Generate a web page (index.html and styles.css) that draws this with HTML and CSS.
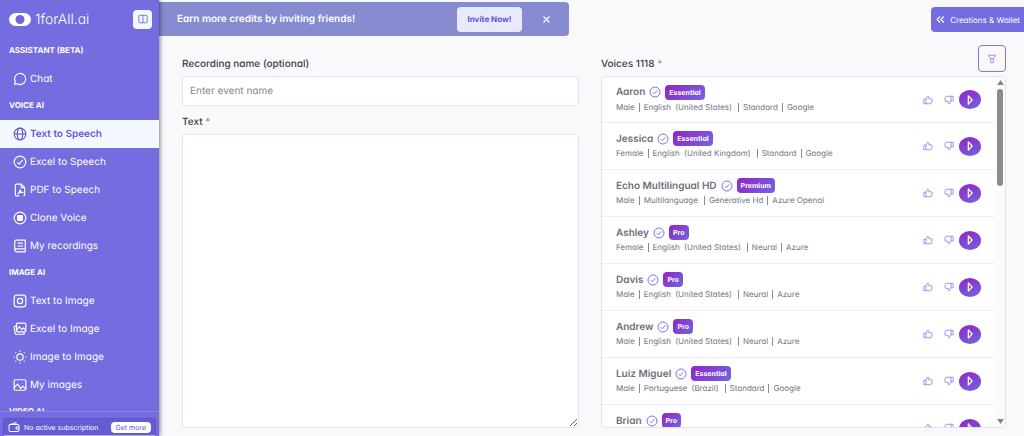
FILE: index.html
```html
<!DOCTYPE html>
<html lang="en">
<head>
    <meta charset="UTF-8">
    <meta name="viewport" content="width=device-width, initial-scale=1.0">
    <title>1forAll.ai | Text to Speech</title>
    <link rel="stylesheet" href="styles.css">
</head>
<body>
    <!-- Shared icons -->
    <svg class="icon-defs" aria-hidden="true">
        <symbol id="check-badge" viewBox="0 0 24 24"><circle cx="12" cy="12" r="10"/><path d="M7.500 12.500l3 3 6-7"/></symbol>
        <symbol id="thumb-up" viewBox="0 0 24 24"><path d="M2 10h5v11H2zM7 11l4-8c2 0 3 1 3 3v3h6c1.500 0 2.300 1 2 2.500l-1.500 7.500c-.3 1.300-1 2-2.500 2H7"/></symbol>
        <symbol id="thumb-down" viewBox="0 0 24 24"><path d="M22 14h-5V3h5zM17 13l-4 8c-2 0-3-1-3-3v-3H4c-1.500 0-2.300-1-2-2.500L3.500 5c.3-1.300 1-2 2.500-2h11"/></symbol>
        <symbol id="play" viewBox="0 0 24 24"><path d="M8 2l9 10-9 10z"/></symbol>
    </svg>

    <!-- Sidebar -->
    <aside class="sidebar">
        <div class="brand">
            <a href="#" class="logo">
                <svg class="logo-mark" viewBox="0 0 22 13" aria-hidden="true"><rect width="22" height="13" rx="6.500" fill="#fff"/><circle cx="11" cy="6.500" r="4.500" fill="#6f66dc"/></svg>
                <span>1forAll.ai</span>
            </a>
            <button type="button" class="collapse-button" aria-label="Collapse menu">
                <svg viewBox="0 0 24 24"><rect x="2" y="3" width="20" height="18" rx="2"/><path d="M12 3v18"/></svg>
            </button>
        </div>
        <nav class="menu">
            <h2>ASSISTANT (BETA)</h2>
            <a href="#"><svg viewBox="0 0 24 24"><path d="M2.500 21.500l1.400-5A9.500 9.500 0 1 1 7.500 20.200z"/></svg>Chat</a>

            <h2>VOICE AI</h2>
            <a href="#" class="active"><svg viewBox="0 0 24 24"><circle cx="12" cy="12" r="10"/><ellipse cx="12" cy="12" rx="4.500" ry="10"/><path d="M2 12h20"/></svg>Text to Speech</a>
            <a href="#"><svg viewBox="0 0 24 24"><use href="#check-badge"/></svg>Excel to Speech</a>
            <a href="#"><svg viewBox="0 0 24 24"><path d="M11 22H6a2 2 0 0 1-2-2V4a2 2 0 0 1 2-2h8l6 6v12a2 2 0 0 1-2 2M14 2v6h6M8 19c3-2 4-5 4-8M12 12c1 3 3 5 6 5M9 17c2-1 5-2 8-1"/></svg>PDF to Speech</a>
            <a href="#"><svg viewBox="0 0 24 24"><circle cx="12" cy="12" r="10"/><rect x="8" y="8" width="8" height="8" rx="1" fill="currentColor"/></svg>Clone Voice</a>
            <a href="#"><svg viewBox="0 0 24 24"><path d="M21 17V2H5a2 2 0 0 0-2 2v15a3 3 0 0 0 3 3h15v-5H6a3 3 0 0 0-3 2M8 7h9M8 12h9"/></svg>My recordings</a>

            <h2>IMAGE AI</h2>
            <a href="#"><svg viewBox="0 0 24 24"><rect x="2" y="2" width="20" height="20" rx="5"/><circle cx="12" cy="12" r="4.500"/><path d="M17.500 6v1"/></svg>Text to Image</a>
            <a href="#"><svg viewBox="0 0 24 24"><rect x="6" y="2" width="16" height="15" rx="2"/><path d="M6 6L2 8l2 13h15v-4M6 14l5-6 4 5 3-3 4 5"/></svg>Excel to Image</a>
            <a href="#"><svg viewBox="0 0 24 24"><circle cx="12" cy="12" r="5.500"/><path d="M12 1v2M12 21v2M1 12h2M21 12h2M4 4l1.500 1.500M18.500 18.500L20 20M20 4l-1.500 1.500M5.500 18.500L4 20"/></svg>Image to Image</a>
            <a href="#"><svg viewBox="0 0 24 24"><rect x="2" y="3" width="20" height="18" rx="2"/><path d="M2 17l6-7 5 8 4-4 5 5M16 8v1"/></svg>My images</a>

            <h2>VIDEO AI</h2>
        </nav>
        <div class="plan">
            <div class="plan-card">
                <svg viewBox="0 0 24 24"><path d="M3 7h17a2 2 0 0 1 2 2v10a2 2 0 0 1-2 2H4a2 2 0 0 1-2-2V8l14-5v4M22 12h-6v4h6"/></svg>
                <span>No active subscription</span>
                <a href="#">Get more</a>
            </div>
        </div>
    </aside>

    <!-- Main Section -->
    <main>
        <div class="topbar">
            <div class="banner">
                <p>Earn more credits by inviting friends!</p>
                <button type="button" class="invite-button">Invite Now!</button>
                <button type="button" class="close-button" aria-label="Close">
                    <svg viewBox="0 0 24 24"><path d="M4 4l16 16M20 4L4 20"/></svg>
                </button>
            </div>
            <button type="button" class="wallet-button">
                <svg viewBox="0 0 24 24"><path d="M11 4l-8 8 8 8M21 4l-8 8 8 8"/></svg>
                Creations &amp; Wallet
            </button>
        </div>

        <div class="workspace">
            <form class="recording">
                <label for="recording-name">Recording name (optional)</label>
                <input type="text" id="recording-name" placeholder="Enter event name">
                <label for="recording-text">Text <span class="required">*</span></label>
                <textarea id="recording-text"></textarea>
            </form>

            <section class="voices">
                <div class="voices-head">
                    <h3>Voices 1118 <span class="required">*</span></h3>
                    <button type="button" class="filter-button" aria-label="Filter voices">
                        <svg viewBox="0 0 24 24"><path d="M3 3h18l-6 9v9H9v-9zM8 11h8"/></svg>
                    </button>
                </div>
                <div class="voices-box">
                    <ul class="voice-list">
                        <li>
                            <div class="voice">
                                <p class="name">Aaron <svg><use href="#check-badge"/></svg><span class="badge">Essential</span></p>
                                <p class="meta"><span>Male</span><span class="lang">English <i>(United States)</i></span><span>Standard</span><span>Google</span></p>
                            </div>
                            <button type="button" class="vote" aria-label="Like"><svg><use href="#thumb-up"/></svg></button>
                            <button type="button" class="vote" aria-label="Dislike"><svg><use href="#thumb-down"/></svg></button>
                            <button type="button" class="play" aria-label="Play"><svg><use href="#play"/></svg></button>
                        </li>
                        <li>
                            <div class="voice">
                                <p class="name">Jessica <svg><use href="#check-badge"/></svg><span class="badge">Essential</span></p>
                                <p class="meta"><span>Female</span><span class="lang">English <i>(United Kingdom)</i></span><span>Standard</span><span>Google</span></p>
                            </div>
                            <button type="button" class="vote" aria-label="Like"><svg><use href="#thumb-up"/></svg></button>
                            <button type="button" class="vote" aria-label="Dislike"><svg><use href="#thumb-down"/></svg></button>
                            <button type="button" class="play" aria-label="Play"><svg><use href="#play"/></svg></button>
                        </li>
                        <li>
                            <div class="voice">
                                <p class="name">Echo Multilingual HD <svg><use href="#check-badge"/></svg><span class="badge">Premium</span></p>
                                <p class="meta"><span>Male</span><span class="lang">Multilanguage</span><span>Generative Hd</span><span>Azure Openai</span></p>
                            </div>
                            <button type="button" class="vote" aria-label="Like"><svg><use href="#thumb-up"/></svg></button>
                            <button type="button" class="vote" aria-label="Dislike"><svg><use href="#thumb-down"/></svg></button>
                            <button type="button" class="play" aria-label="Play"><svg><use href="#play"/></svg></button>
                        </li>
                        <li>
                            <div class="voice">
                                <p class="name">Ashley <svg><use href="#check-badge"/></svg><span class="badge">Pro</span></p>
                                <p class="meta"><span>Female</span><span class="lang">English <i>(United States)</i></span><span>Neural</span><span>Azure</span></p>
                            </div>
                            <button type="button" class="vote" aria-label="Like"><svg><use href="#thumb-up"/></svg></button>
                            <button type="button" class="vote" aria-label="Dislike"><svg><use href="#thumb-down"/></svg></button>
                            <button type="button" class="play" aria-label="Play"><svg><use href="#play"/></svg></button>
                        </li>
                        <li>
                            <div class="voice">
                                <p class="name">Davis <svg><use href="#check-badge"/></svg><span class="badge">Pro</span></p>
                                <p class="meta"><span>Male</span><span class="lang">English <i>(United States)</i></span><span>Neural</span><span>Azure</span></p>
                            </div>
                            <button type="button" class="vote" aria-label="Like"><svg><use href="#thumb-up"/></svg></button>
                            <button type="button" class="vote" aria-label="Dislike"><svg><use href="#thumb-down"/></svg></button>
                            <button type="button" class="play" aria-label="Play"><svg><use href="#play"/></svg></button>
                        </li>
                        <li>
                            <div class="voice">
                                <p class="name">Andrew <svg><use href="#check-badge"/></svg><span class="badge">Pro</span></p>
                                <p class="meta"><span>Male</span><span class="lang">English <i>(United States)</i></span><span>Neural</span><span>Azure</span></p>
                            </div>
                            <button type="button" class="vote" aria-label="Like"><svg><use href="#thumb-up"/></svg></button>
                            <button type="button" class="vote" aria-label="Dislike"><svg><use href="#thumb-down"/></svg></button>
                            <button type="button" class="play" aria-label="Play"><svg><use href="#play"/></svg></button>
                        </li>
                        <li>
                            <div class="voice">
                                <p class="name">Luiz Miguel <svg><use href="#check-badge"/></svg><span class="badge">Essential</span></p>
                                <p class="meta"><span>Male</span><span class="lang">Portuguese <i>(Brazil)</i></span><span>Standard</span><span>Google</span></p>
                            </div>
                            <button type="button" class="vote" aria-label="Like"><svg><use href="#thumb-up"/></svg></button>
                            <button type="button" class="vote" aria-label="Dislike"><svg><use href="#thumb-down"/></svg></button>
                            <button type="button" class="play" aria-label="Play"><svg><use href="#play"/></svg></button>
                        </li>
                        <li>
                            <div class="voice">
                                <p class="name">Brian <svg><use href="#check-badge"/></svg><span class="badge">Pro</span></p>
                            </div>
                            <button type="button" class="vote" aria-label="Like"><svg><use href="#thumb-up"/></svg></button>
                            <button type="button" class="vote" aria-label="Dislike"><svg><use href="#thumb-down"/></svg></button>
                            <button type="button" class="play" aria-label="Play"><svg><use href="#play"/></svg></button>
                        </li>
                    </ul>
                    <div class="scrollbar" aria-hidden="true">
                        <svg viewBox="0 0 8 6"><path d="M4 0l4 6H0z"/></svg>
                        <div class="thumb"></div>
                        <svg viewBox="0 0 8 6"><path d="M4 6l4-6H0z"/></svg>
                    </div>
                </div>
            </section>
        </div>
    </main>
</body>
</html>
```
FILE: styles.css
```css
/* General Styles */
* {
    box-sizing: border-box;
}

body {
    font-family: Inter, "Liberation Sans", sans-serif;
    font-feature-settings: "cv11";
    font-size: 10px;
    text-rendering: geometricPrecision;
    background-color: #f9f9fc;
    color: #3a3c4c;
    margin: 0;
    display: flex;
    height: 100vh;
    overflow: hidden;
}

h2,
h3,
p,
ul {
    margin: 0;
    padding: 0;
}

button,
input,
textarea {
    font: inherit;
    font-feature-settings: inherit;
    text-rendering: inherit;
    margin: 0;
    padding: 0;
}

button {
    border: none;
    cursor: pointer;
    display: flex;
    align-items: center;
    justify-content: center;
}

a {
    color: inherit;
    text-decoration: none;
}

svg {
    fill: none;
    stroke: currentColor;
    stroke-width: 2;
    stroke-linejoin: round;
    flex: none;
}

.icon-defs {
    position: absolute;
    width: 0;
    height: 0;
}

/* Sidebar */
.sidebar {
    width: 159px;
    flex: none;
    display: flex;
    flex-direction: column;
    background-color: #756ce0;
    color: white;
    box-shadow: 1px 0 4px rgba(0, 0, 0, 0.5);
    z-index: 1;
}

.brand {
    display: flex;
    align-items: center;
    justify-content: space-between;
    height: 38px;
    flex: none;
    padding: 0 7px 0 9px;
}

.logo {
    display: flex;
    align-items: center;
    gap: 4px;
    font-size: 14px;
    font-weight: 300;
}

.logo-mark {
    width: 22px;
    height: 13px;
    stroke: none;
}

.collapse-button {
    width: 19px;
    height: 19px;
    border-radius: 4px;
    background-color: #f4f7fe;
    color: #6a60d8;
}

.collapse-button svg {
    width: 10px;
    height: 10px;
}

.menu {
    flex: 1;
    min-height: 0;
    overflow: hidden;
}

.menu h2 {
    font-size: 8px;
    font-weight: 700;
    line-height: 25px;
    height: 27px;
    padding-left: 9px;
}

.menu a {
    display: flex;
    align-items: center;
    gap: 3px;
    height: 28px;
    padding-left: 13px;
}

.menu a svg {
    width: 14px;
    height: 14px;
}

.menu a.active {
    background-color: #f4f8fe;
    color: #6358d5;
    font-weight: 600;
}

.plan {
    flex: none;
    border-top: 1px solid #887fe8;
    padding: 6px 3px 0;
}

.plan-card {
    display: flex;
    align-items: center;
    gap: 4px;
    height: 18px;
    padding: 0 4px;
    border: 1px solid #5d53cb;
    border-bottom-color: #b4aef0;
    border-radius: 3px 3px 0 0;
    background-color: #655bd3;
    font-size: 7px;
    white-space: nowrap;
}

.plan-card svg {
    width: 12px;
    height: 12px;
}

.plan-card a {
    margin-left: auto;
    padding: 0 5px;
    border-radius: 4px;
    line-height: 11px;
    background-color: white;
    color: #6358d5;
}

/* Top Bar */
main {
    flex: 1;
    min-width: 0;
    display: flex;
    flex-direction: column;
}

.topbar {
    display: flex;
    align-items: flex-start;
    justify-content: space-between;
    height: 40px;
    flex: none;
    padding-top: 2px;
}

.banner {
    display: flex;
    align-items: center;
    width: 410px;
    height: 34px;
    padding: 0 18px;
    border-radius: 0 4px 4px 0;
    background-color: #868ccf;
    color: white;
}

.banner p {
    flex: 1;
    font-weight: 600;
}

.invite-button {
    width: 65px;
    height: 25px;
    border-radius: 4px;
    background-color: #e9e9fd;
    color: #5a57c8;
    font-size: 8px;
    font-weight: 700;
}

.close-button {
    margin-left: 19px;
    width: 10px;
    height: 10px;
    background: none;
    color: white;
}

.close-button svg {
    width: 9px;
    height: 9px;
    stroke-width: 3;
}

.wallet-button {
    gap: 5px;
    height: 25px;
    margin-top: 5px;
    padding: 0 4px 0 5px;
    border-radius: 4px 0 0 4px;
    background-color: #756ce0;
    color: white;
    font-size: 8px;
}

.wallet-button svg {
    width: 9px;
    height: 9px;
    stroke-width: 3;
}

/* Recording Form */
.workspace {
    flex: 1;
    min-height: 0;
    display: grid;
    grid-template-columns: 49fr 50fr;
    gap: 22px;
    padding: 0 18px 8px 23px;
}

.recording {
    display: flex;
    flex-direction: column;
    padding-top: 14px;
}

.recording label,
.voices h3 {
    font-size: 10px;
    font-weight: 500;
    line-height: 20px;
    padding-bottom: 2px;
}

.required {
    color: #c98a6c;
}

.recording input,
.recording textarea {
    border: 1px solid #e3e0fa;
    border-radius: 4px;
    background-color: white;
    color: #3a3c4c;
    outline: none;
}

.recording input {
    height: 30px;
    margin-bottom: 6px;
    padding: 0 7px;
}

.recording input::placeholder {
    color: #81858f;
}

.recording textarea {
    flex: 1;
    padding: 7px;
}

/* Voices */
.voices {
    display: flex;
    flex-direction: column;
    min-width: 0;
    min-height: 0;
}

.voices-head {
    display: flex;
    align-items: flex-end;
    justify-content: space-between;
    height: 36px;
    flex: none;
}

.filter-button {
    width: 28px;
    height: 27px;
    margin-bottom: 4px;
    border: 1px solid #8f6fe4;
    border-radius: 4px;
    background: none;
    color: #9a7ce8;
}

.filter-button svg {
    width: 10px;
    height: 10px;
}

.voices-box {
    flex: 1;
    min-height: 0;
    display: flex;
    border: 1px solid #e3e0fa;
    border-radius: 4px;
    background-color: white;
    overflow: hidden;
}

.voice-list {
    flex: 1;
    list-style: none;
}

.voice-list li {
    display: flex;
    align-items: center;
    height: 47px;
    padding: 0 14px;
    border-bottom: 1px solid #eeeef3;
}

.voice-list li:first-child {
    height: 46px;
}

.voice {
    flex: 1;
    height: 40px;
    padding-top: 5px;
}

.name {
    display: flex;
    align-items: center;
    gap: 4px;
    height: 15px;
    color: #6a6f7c;
    font-weight: 600;
}

.name svg {
    width: 12px;
    height: 12px;
    color: #7b72e4;
}

.badge {
    padding: 0 4px;
    border-radius: 4px;
    line-height: 15px;
    background: linear-gradient(135deg, #9124c4, #7266e0);
    color: white;
    font-size: 7px;
    font-weight: 700;
}

.meta {
    display: flex;
    align-items: center;
    height: 15px;
    color: #70747f;
    font-size: 8px;
    line-height: 9px;
}

.meta span + span {
    margin-left: 4px;
    padding-left: 4px;
    border-left: 1px solid #8a8d97;
}

.meta .lang {
    padding-right: 2px;
}

.meta i {
    font-style: normal;
    margin-left: 2px;
}

.vote {
    width: 21px;
    height: 19px;
    background: none;
    color: #8a80ea;
}

.vote svg {
    width: 10px;
    height: 10px;
}

.play {
    width: 22px;
    height: 19px;
    border-radius: 50%;
    background: linear-gradient(160deg, #9124c4, #7266e0);
    color: white;
}

.play svg {
    width: 10px;
    height: 10px;
    stroke-width: 3;
}

.scrollbar {
    display: flex;
    flex-direction: column;
    align-items: center;
    width: 10px;
    padding: 3px 0;
    background-color: #fbfbfb;
}

.scrollbar svg {
    width: 7px;
    height: 5px;
    fill: #858585;
    stroke: none;
}

.scrollbar svg:last-child {
    margin-top: auto;
}

.thumb {
    width: 6px;
    height: 97px;
    margin-top: 4px;
    border-radius: 3px;
    background-color: #8b8b8b;
}
```
